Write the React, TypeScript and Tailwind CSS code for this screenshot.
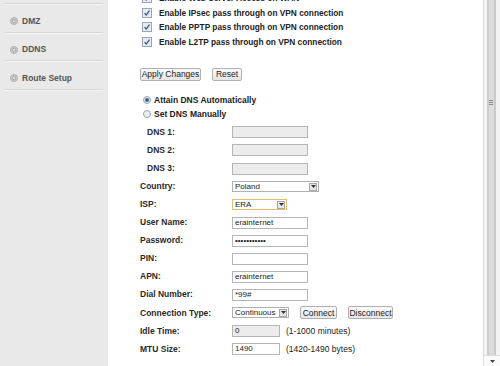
import React from "react";

const font = { fontFamily: '"Liberation Sans", Arial, sans-serif' };

const CheckBox = () => (
  <span className="inline-flex h-[10px] w-[10px] shrink-0 items-center justify-center border border-[#9aa5b8] bg-[#e6eaf2]">
    <svg width="8" height="8" viewBox="0 0 8 8">
      <path d="M1.6 4.2 L3.2 6 L6.5 1.7" fill="none" stroke="#34508a" strokeWidth="1.2" />
    </svg>
  </span>
);

const Radio = ({ on = false }: { on?: boolean }) => (
  <span className="inline-flex h-[8px] w-[8px] shrink-0 items-center justify-center rounded-full border border-[#9aa3ad] bg-[#eef0f2]">
    {on && <span className="h-[4px] w-[4px] rounded-full bg-[#2f5fa8]" />}
  </span>
);

const Btn = ({ children, className = "" }: { children: React.ReactNode; className?: string }) => (
  <span
    className={
      "inline-flex h-[13px] items-center justify-center rounded-[2px] border border-[#b0b0b0] bg-gradient-to-b from-[#fafafa] to-[#e6e6e6] text-[8.5px] text-[#222] " +
      className
    }
  >
    {children}
  </span>
);

const Input = ({
  value = "",
  w = "w-[76px]",
  disabled = false,
}: {
  value?: string;
  w?: string;
  disabled?: boolean;
}) => (
  <span
    className={
      "inline-flex h-[12px] items-center border border-[#b5b5b5] pl-[2px] text-[8px] text-[#222] " +
      w +
      (disabled ? " bg-[#ececec]" : " bg-white")
    }
  >
    {value}
  </span>
);

const Select = ({
  value,
  w,
  focus = false,
}: {
  value: string;
  w: string;
  focus?: boolean;
}) => (
  <span
    className={
      "inline-flex h-[11px] items-center justify-between border bg-white pl-[2px] pr-[1px] text-[8px] text-[#222] " +
      w +
      (focus ? " border-[#e0c070] bg-[#fffdf6]" : " border-[#b0b0b0]")
    }
  >
    <span>{value}</span>
    <span className="inline-flex h-[8px] w-[8px] items-center justify-center border border-[#a8a8a8] bg-[#e6e6e6]">
      <svg width="5" height="3" viewBox="0 0 5 3">
        <path d="M0 0 H5 L2.5 3 Z" fill="#333" />
      </svg>
    </span>
  </span>
);

const Row = ({
  label,
  indent = false,
  children,
}: {
  label: string;
  indent?: boolean;
  children: React.ReactNode;
}) => (
  <div className="flex h-[18.05px] items-center">
    <div className={"w-[92px] text-[8.5px] font-bold text-[#2a2a2a]" + (indent ? " pl-[7px]" : "")}>
      {label}
    </div>
    <div className="flex items-center">{children}</div>
  </div>
);

const SideItem = ({ label }: { label: string }) => (
  <div className="flex h-[28.6px] items-center gap-[4px] border-b border-[#d6d6d6] pl-[5px] pt-[6px] shadow-[0_1px_0_#f6f6f6]">
    <svg width="8" height="8" viewBox="0 0 8 8">
      <circle cx="4" cy="4" r="3.5" fill="#c9c9c9" stroke="#a9a9a9" strokeWidth="0.8" />
      <circle cx="4" cy="4" r="1.7" fill="#dadada" stroke="#9c9c9c" strokeWidth="0.6" />
    </svg>
    <span className="text-[8.5px] font-bold text-[#555]">{label}</span>
  </div>
);

const checks = [
  "Enable Web Server Access on WAN",
  "Enable IPsec pass through on VPN connection",
  "Enable PPTP pass through on VPN connection",
  "Enable L2TP pass through on VPN connection",
];

export default function App() {
  return (
    <div className="flex h-[366px] w-[500px] overflow-hidden bg-white" style={font}>
      <aside className="w-[108px] shrink-0 bg-[#e9e9e9]">
        <div className="mx-[5px] flex flex-col">
          <div className="h-[4.3px] border-b border-[#d6d6d6] shadow-[0_1px_0_#f6f6f6]" />
          <SideItem label="DMZ" />
          <SideItem label="DDNS" />
          <SideItem label="Route Setup" />
        </div>
      </aside>

      <main className="flex-1 overflow-hidden pl-[32px]">
        <div className="mt-[-9px]">
          {checks.map((c) => (
            <div key={c} className="flex h-[14.5px] items-center gap-[7px] pl-[2px]">
              <CheckBox />
              <span className="text-[8.3px] font-bold text-[#222]">{c}</span>
            </div>
          ))}
        </div>

        <div className="mt-[19px] flex items-center">
          <Btn className="w-[61px]">Apply Changes</Btn>
          <Btn className="ml-[11px] w-[30px]">Reset</Btn>
        </div>

        <div className="mt-[12px]">
          <div className="flex h-[14px] items-center gap-[3px] pl-[3px]">
            <Radio on />
            <span className="text-[8.5px] font-bold text-[#222]">Attain DNS Automatically</span>
          </div>
          <div className="flex h-[14px] items-center gap-[3px] pl-[3px]">
            <Radio />
            <span className="text-[8.5px] font-bold text-[#222]">Set DNS Manually</span>
          </div>
        </div>

        <div className="mt-[2.4px]">
          <Row label="DNS 1:" indent>
            <Input disabled />
          </Row>
          <Row label="DNS 2:" indent>
            <Input disabled />
          </Row>
          <Row label="DNS 3:" indent>
            <Input disabled />
          </Row>
          <Row label="Country:">
            <Select value="Poland" w="w-[87px]" />
          </Row>
          <Row label="ISP:">
            <Select value="ERA" w="w-[55px]" focus />
          </Row>
          <Row label="User Name:">
            <Input value="erainternet" />
          </Row>
          <Row label="Password:">
            <Input value="•••••••••••" />
          </Row>
          <Row label="PIN:">
            <Input />
          </Row>
          <Row label="APN:">
            <Input value="erainternet" />
          </Row>
          <Row label="Dial Number:">
            <Input value="*99#" />
          </Row>
          <Row label="Connection Type:">
            <Select value="Continuous" w="w-[57px]" />
            <Btn className="ml-[11px] w-[37px]">Connect</Btn>
            <Btn className="ml-[11px] w-[45px]">Disconnect</Btn>
          </Row>
          <Row label="Idle Time:">
            <Input value="0" w="w-[48px]" disabled />
            <span className="ml-[6px] text-[8.5px] text-[#222]">(1-1000 minutes)</span>
          </Row>
          <Row label="MTU Size:">
            <Input value="1490" w="w-[48px]" />
            <span className="ml-[6px] text-[8.5px] text-[#222]">(1420-1490 bytes)</span>
          </Row>
        </div>
      </main>

      <div className="flex w-[17px] shrink-0 flex-col border-l border-[#dcdcdc] bg-[#f3f3f3]">
        <div className="relative flex-1">
          <div className="absolute inset-y-0 left-[3px] w-[2px] bg-[#cdcdcd]" />
          <div className="absolute inset-y-0 left-[5px] w-[5px] bg-[#dcdcdc]" />
          <div className="absolute inset-y-0 left-[10px] w-[2px] bg-[#c9c9c9]" />
          <div className="absolute left-[3px] top-[98px] flex h-[9px] w-[8px] flex-col justify-center gap-[1px] px-[2px]">
            <span className="h-px bg-[#8a8a8a]" />
            <span className="h-px bg-[#8a8a8a]" />
            <span className="h-px bg-[#8a8a8a]" />
          </div>
        </div>
        <div className="flex h-[11px] items-center justify-center border-t border-[#dcdcdc] bg-[#fafafa]">
          <svg width="5" height="3" viewBox="0 0 5 3">
            <path d="M0 0 H5 L2.5 3 Z" fill="#444" />
          </svg>
        </div>
      </div>
    </div>
  );
}
